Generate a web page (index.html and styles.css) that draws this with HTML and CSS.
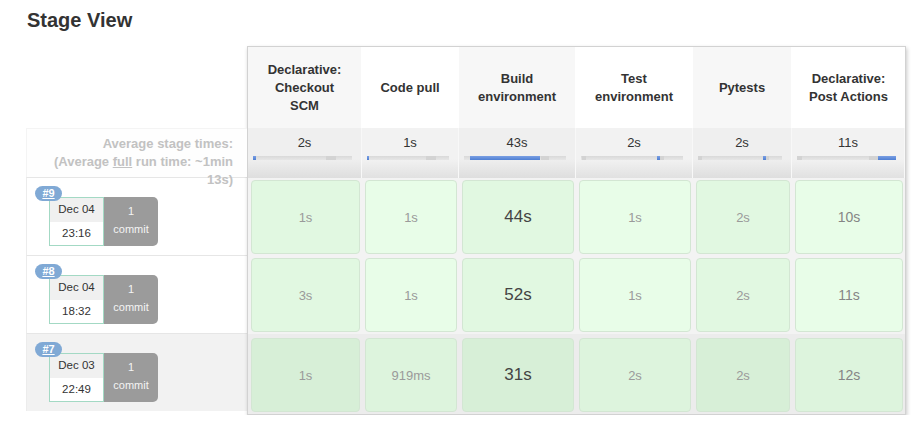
FILE: index.html
```html
<!DOCTYPE html>
<html>
<head>
<meta charset="utf-8">
<link rel="stylesheet" href="styles.css">
</head>
<body>
<div class="page">
  <h1 class="title">Stage View</h1>
  <div class="stage-view">
    <div class="runs">
      <div class="runs-spacer"></div>
      <div class="avg-label">Average stage times:<br>(Average <u>full</u> run time: ~1min 13s)</div>
      <div class="run">
        <span class="badge">#9</span>
        <div class="run-box">
          <div class="date"><div class="day">Dec 04</div><div class="time">23:16</div></div>
          <div class="commits">1<br>commit</div>
        </div>
      </div>
      <div class="run">
        <span class="badge">#8</span>
        <div class="run-box">
          <div class="date"><div class="day">Dec 04</div><div class="time">18:32</div></div>
          <div class="commits">1<br>commit</div>
        </div>
      </div>
      <div class="run run-hl">
        <span class="badge">#7</span>
        <div class="run-box">
          <div class="date"><div class="day">Dec 03</div><div class="time">22:49</div></div>
          <div class="commits">1<br>commit</div>
        </div>
      </div>
    </div>

    <div class="panel">
      <div class="head c-odd">Declarative: Checkout SCM</div>
      <div class="head c-even">Code pull</div>
      <div class="head c-odd">Build environment</div>
      <div class="head c-even">Test environment</div>
      <div class="head c-odd">Pytests</div>
      <div class="head c-even">Declarative: Post Actions</div>

      <div class="avg a-odd"><div class="avg-time">2s</div><div class="bar"><span class="tick" style="left:73px;width:10px"></span><span class="fill" style="left:0;width:3px"></span></div></div>
      <div class="avg a-even"><div class="avg-time">1s</div><div class="bar"><span class="tick" style="left:59px;width:10px"></span><span class="fill" style="left:0;width:2px"></span></div></div>
      <div class="avg a-odd"><div class="avg-time">43s</div><div class="bar"><span class="tick" style="left:77px;width:8px"></span><span class="fill" style="left:6px;width:70px"></span></div></div>
      <div class="avg a-even"><div class="avg-time">2s</div><div class="bar"><span class="tick" style="left:1px;width:4px"></span><span class="tick" style="left:79px;width:4px"></span><span class="fill" style="left:76px;width:3px"></span></div></div>
      <div class="avg a-odd"><div class="avg-time">2s</div><div class="bar"><span class="tick" style="left:0;width:4px"></span><span class="tick" style="left:68px;width:3px"></span><span class="fill" style="left:65px;width:3px"></span></div></div>
      <div class="avg a-even"><div class="avg-time">11s</div><div class="bar"><span class="tick" style="left:0;width:5px"></span><span class="tick" style="left:72px;width:9px"></span><span class="fill" style="left:81px;width:18px"></span></div></div>

      <div class="cell"><div class="box g-odd sm">1s</div></div>
      <div class="cell"><div class="box g-even sm">1s</div></div>
      <div class="cell"><div class="box g-odd lg">44s</div></div>
      <div class="cell"><div class="box g-even sm">1s</div></div>
      <div class="cell"><div class="box g-odd sm">2s</div></div>
      <div class="cell"><div class="box g-even md">10s</div></div>

      <div class="cell"><div class="box g-odd sm">3s</div></div>
      <div class="cell"><div class="box g-even sm">1s</div></div>
      <div class="cell"><div class="box g-odd lg">52s</div></div>
      <div class="cell"><div class="box g-even sm">1s</div></div>
      <div class="cell"><div class="box g-odd sm">2s</div></div>
      <div class="cell"><div class="box g-even md">11s</div></div>

      <div class="cell cell-hl"><div class="box h-odd sm">1s</div></div>
      <div class="cell cell-hl"><div class="box h-even sm">919ms</div></div>
      <div class="cell cell-hl"><div class="box h-odd lg">31s</div></div>
      <div class="cell cell-hl"><div class="box h-even sm">2s</div></div>
      <div class="cell cell-hl"><div class="box h-odd sm">2s</div></div>
      <div class="cell cell-hl"><div class="box h-even md">12s</div></div>
    </div>
  </div>
</div>
</body>
</html>
```

FILE: styles.css
```css
* { box-sizing: border-box; }
html, body { margin: 0; padding: 0; background: #fff; }
body {
  font-family: "Liberation Sans", Arial, Helvetica, sans-serif;
  color: #333;
}
.page { padding: 8px 0 0 26px; }
.title {
  margin: 0 0 14px 1px;
  font-size: 20px;
  line-height: 24px;
  font-weight: bold;
  color: #333;
}
.stage-view { display: flex; align-items: flex-start; }

/* left column */
.runs { width: 221px; flex: none; }
.runs-spacer { height: 82px; }
.avg-label {
  height: 49px;
  padding: 6px 14px 0 0;
  text-align: right;
  font-size: 13px;
  line-height: 18px;
  font-weight: bold;
  color: #c2c2c2;
  background: #fefefe;
  border-top: 1px solid #f4f4f4;
  border-left: 1px solid #f4f4f4;
  position: relative;
  z-index: 1;
}
.avg-label u { text-decoration: underline; }
.run {
  height: 78px;
  padding: 8px 0 0 8px;
  border-top: 1px solid #e6e6e6;
  border-left: 1px solid #ececec;
}
.run-hl { background: #f2f2f2; height: 78px; }
.badge {
  position: relative;
  z-index: 1;
  display: block;
  width: 27px;
  height: 15px;
  border-radius: 8px;
  background: #80a9d5;
  color: #fff;
  font-size: 11px;
  line-height: 15px;
  font-weight: bold;
  text-align: center;
  text-decoration: underline;
}
.run-box {
  display: flex;
  margin: -4px 0 0 14px;
  height: 49px;
}
.date {
  width: 55px;
  border: 1px solid #a3d9c4;
  font-size: 11.5px;
  color: #333;
  text-align: center;
  background: #fff;
}
.day { height: 24px; line-height: 23px; background: #f0f0f0; }
.time { height: 23px; line-height: 23px; }
.commits {
  width: 54px;
  background: #9b9b9b;
  border-radius: 0 5px 5px 0;
  color: #f4f4f4;
  font-size: 11px;
  line-height: 18px;
  text-align: center;
  padding-top: 5px;
}

/* panel */
.panel {
  width: 659px;
  flex: none;
  display: grid;
  grid-template-columns: 114px 97px 117px 117px 99px 113px;
  grid-template-rows: 81px 50px 78px 78px 80px;
  border: 1px solid #d2d2d2;
  box-shadow: 1px 2px 4px rgba(0, 0, 0, 0.22);
  background: #f2f2f2;
}
.head {
  display: flex;
  align-items: center;
  justify-content: center;
  text-align: center;
  padding: 0 12px;
  font-size: 13px;
  line-height: 18px;
  font-weight: bold;
  color: #333;
  border-right: 1px solid #fff;
}
.head:nth-child(6) { border-right: none; }
.c-odd { background: #f7f7f7; }
.c-even { background: #fff; }

.avg {
  padding-top: 6px;
  text-align: center;
  border-right: 1px solid #f8f8f8;
}
.a-odd { background: linear-gradient(#efefef 0, #efefef 62%, #dedede 100%); }
.a-even { background: linear-gradient(#f2f2f2 0, #f2f2f2 62%, #e1e1e1 100%); }
.avg-time { font-size: 13px; line-height: 18px; color: #333; }
.bar {
  position: relative;
  height: 4px;
  margin: 4px 9px 0 5px;
  background: linear-gradient(#d9d9d9, #e6e6e6);
}
.bar span { position: absolute; top: 0; height: 4px; }
.tick { background: #d3d3d3; }
.fill { background: linear-gradient(#7a9fe3, #4f7fd3); }

.cell {
  padding: 2px 2px 2px 3px;
  background: #f3f3f3;
}
.cell-hl { padding-top: 4px; background: #ececec; }
.box {
  height: 100%;
  border: 1px solid #d3e6d3;
  border-radius: 4px;
  display: flex;
  align-items: center;
  justify-content: center;
}
.g-odd { background: #e1f8e1; }
.g-even { background: #e8fde8; }
.h-odd { background: #d7efd7; }
.h-even { background: #ddf4dd; }
.sm { font-size: 13px; color: #9a9a9a; }
.md { font-size: 14px; color: #858585; }
.lg { font-size: 17px; color: #444; }
```
